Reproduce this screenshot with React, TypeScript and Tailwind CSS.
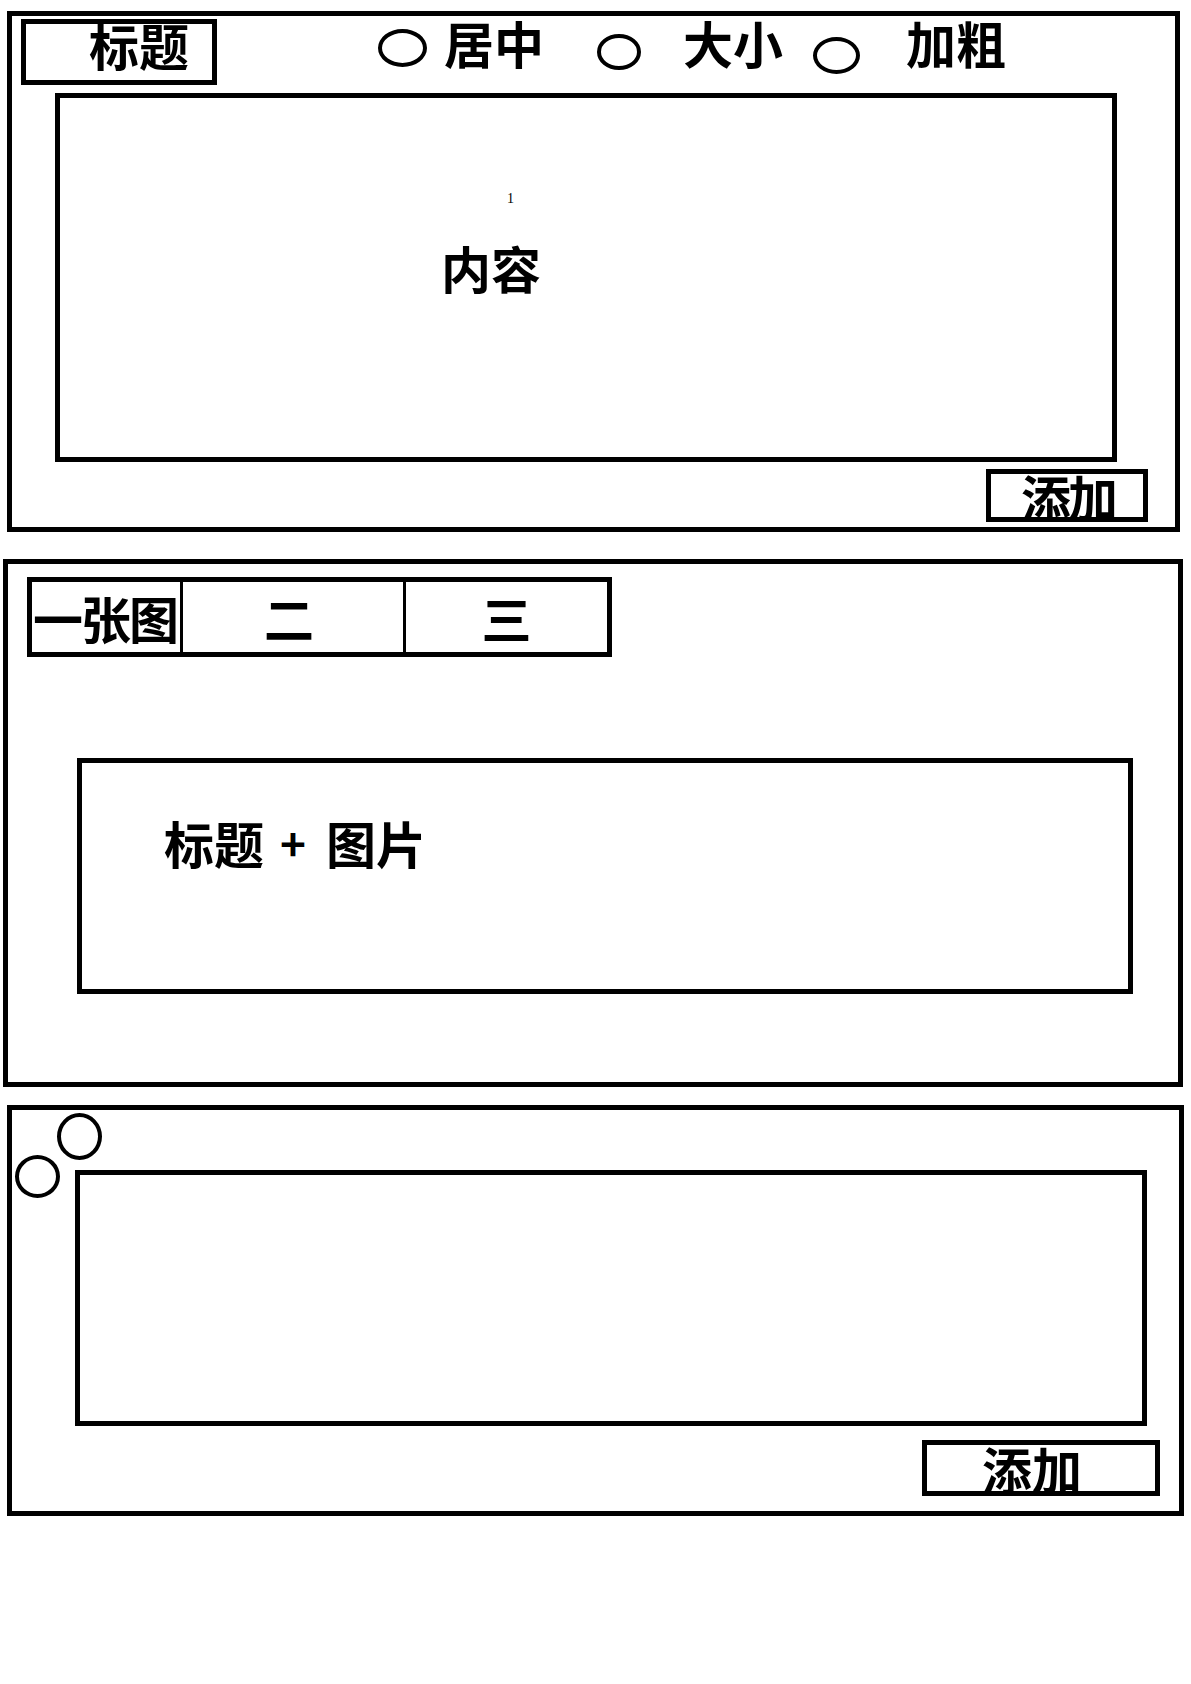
const cjk = "font-['Noto_Sans_CJK_SC','Noto_Sans',sans-serif] font-bold text-black";

function Radio({ className }: { className: string }) {
  return <div className={`rounded-[50%] border-4 border-black shrink-0 ${className}`} />;
}

export default function App() {
  return (
    <div className="w-[1191px] min-h-[1684px] bg-white flex flex-col">
      {/* editor panel */}
      <div className="ml-[7px] mt-[11px] w-[1173px] h-[521px] border-[5px] border-black flex flex-col">
        <div className="flex items-start">
          <div className="ml-[9px] mt-[3px] w-[196px] h-[66px] border-[5px] border-black overflow-hidden">
            <span className={`${cjk} block pl-[63px] -mt-[5px] text-[50px] leading-none`}>标题</span>
          </div>
          <Radio className="ml-[161px] mt-[13px] w-[49px] h-[38px]" />
          <span className={`${cjk} ml-[17px] mt-[1px] text-[50px] leading-none`}>居中</span>
          <Radio className="ml-[53px] mt-[18px] w-[44px] h-[36px]" />
          <span className={`${cjk} ml-[42px] mt-[1px] text-[50px] leading-none`}>大小</span>
          <Radio className="ml-[30px] mt-[21px] w-[47px] h-[37px]" />
          <span className={`${cjk} ml-[46px] mt-[1px] text-[50px] leading-none`}>加粗</span>
        </div>
        <div className="ml-[43px] mt-[8px] w-[1062px] h-[369px] border-[5px] border-black flex flex-col">
          <span className="ml-[447px] mt-[94px] text-[14px] leading-none font-['Liberation_Serif',serif] text-black">1</span>
          <span className={`${cjk} ml-[381px] mt-[36px] text-[50px] leading-none`}>内容</span>
        </div>
        <div className="self-end mr-[27px] mt-[7px] w-[162px] h-[53px] border-[5px] border-black overflow-hidden">
          <span className={`${cjk} block pl-[30px] -mt-[3px] text-[50px] leading-none tracking-[-3px]`}>添加</span>
        </div>
      </div>

      {/* image panel */}
      <div className="ml-[3px] mt-[27px] w-[1180px] h-[528px] border-[5px] border-black flex flex-col">
        <div className="ml-[19px] mt-[13px] w-[585px] h-[80px] border-[5px] border-black flex">
          <div className="w-[151px] h-full border-r-[3px] border-black flex items-center overflow-hidden">
            <span className={`${cjk} pl-[1px] text-[50px] leading-none tracking-[-2px] whitespace-nowrap`}>一张图</span>
          </div>
          <div className="w-[223px] h-full border-r-[3px] border-black flex items-center justify-center">
            <span className={`${cjk} mr-[8px] text-[50px] leading-none`}>二</span>
          </div>
          <div className="flex-1 h-full flex items-center justify-center">
            <span className={`${cjk} text-[50px] leading-none`}>三</span>
          </div>
        </div>
        <div className="ml-[69px] mt-[101px] w-[1056px] h-[236px] border-[5px] border-black flex flex-col">
          <div className="ml-[82px] mt-[54px] flex items-center">
            <span className={`${cjk} text-[50px] leading-none`}>标题</span>
            <span className={`${cjk} ml-[16px] text-[44px] leading-none`}>+</span>
            <span className={`${cjk} ml-[20px] text-[50px] leading-none`}>图片</span>
          </div>
        </div>
      </div>

      {/* shape panel */}
      <div className="relative ml-[7px] mt-[18px] w-[1177px] h-[411px] border-[5px] border-black flex flex-col">
        <Radio className="absolute left-[45px] top-[3px] w-[45px] h-[47px]" />
        <Radio className="absolute left-[3px] top-[45px] w-[45px] h-[43px]" />
        <div className="ml-[63px] mt-[60px] w-[1072px] h-[256px] border-[5px] border-black" />
        <div className="self-end mr-[19px] mt-[14px] w-[238px] h-[56px] border-[5px] border-black flex items-center overflow-hidden">
          <span className={`${cjk} pl-[55px] text-[50px] leading-none`}>添加</span>
        </div>
      </div>
    </div>
  );
}
